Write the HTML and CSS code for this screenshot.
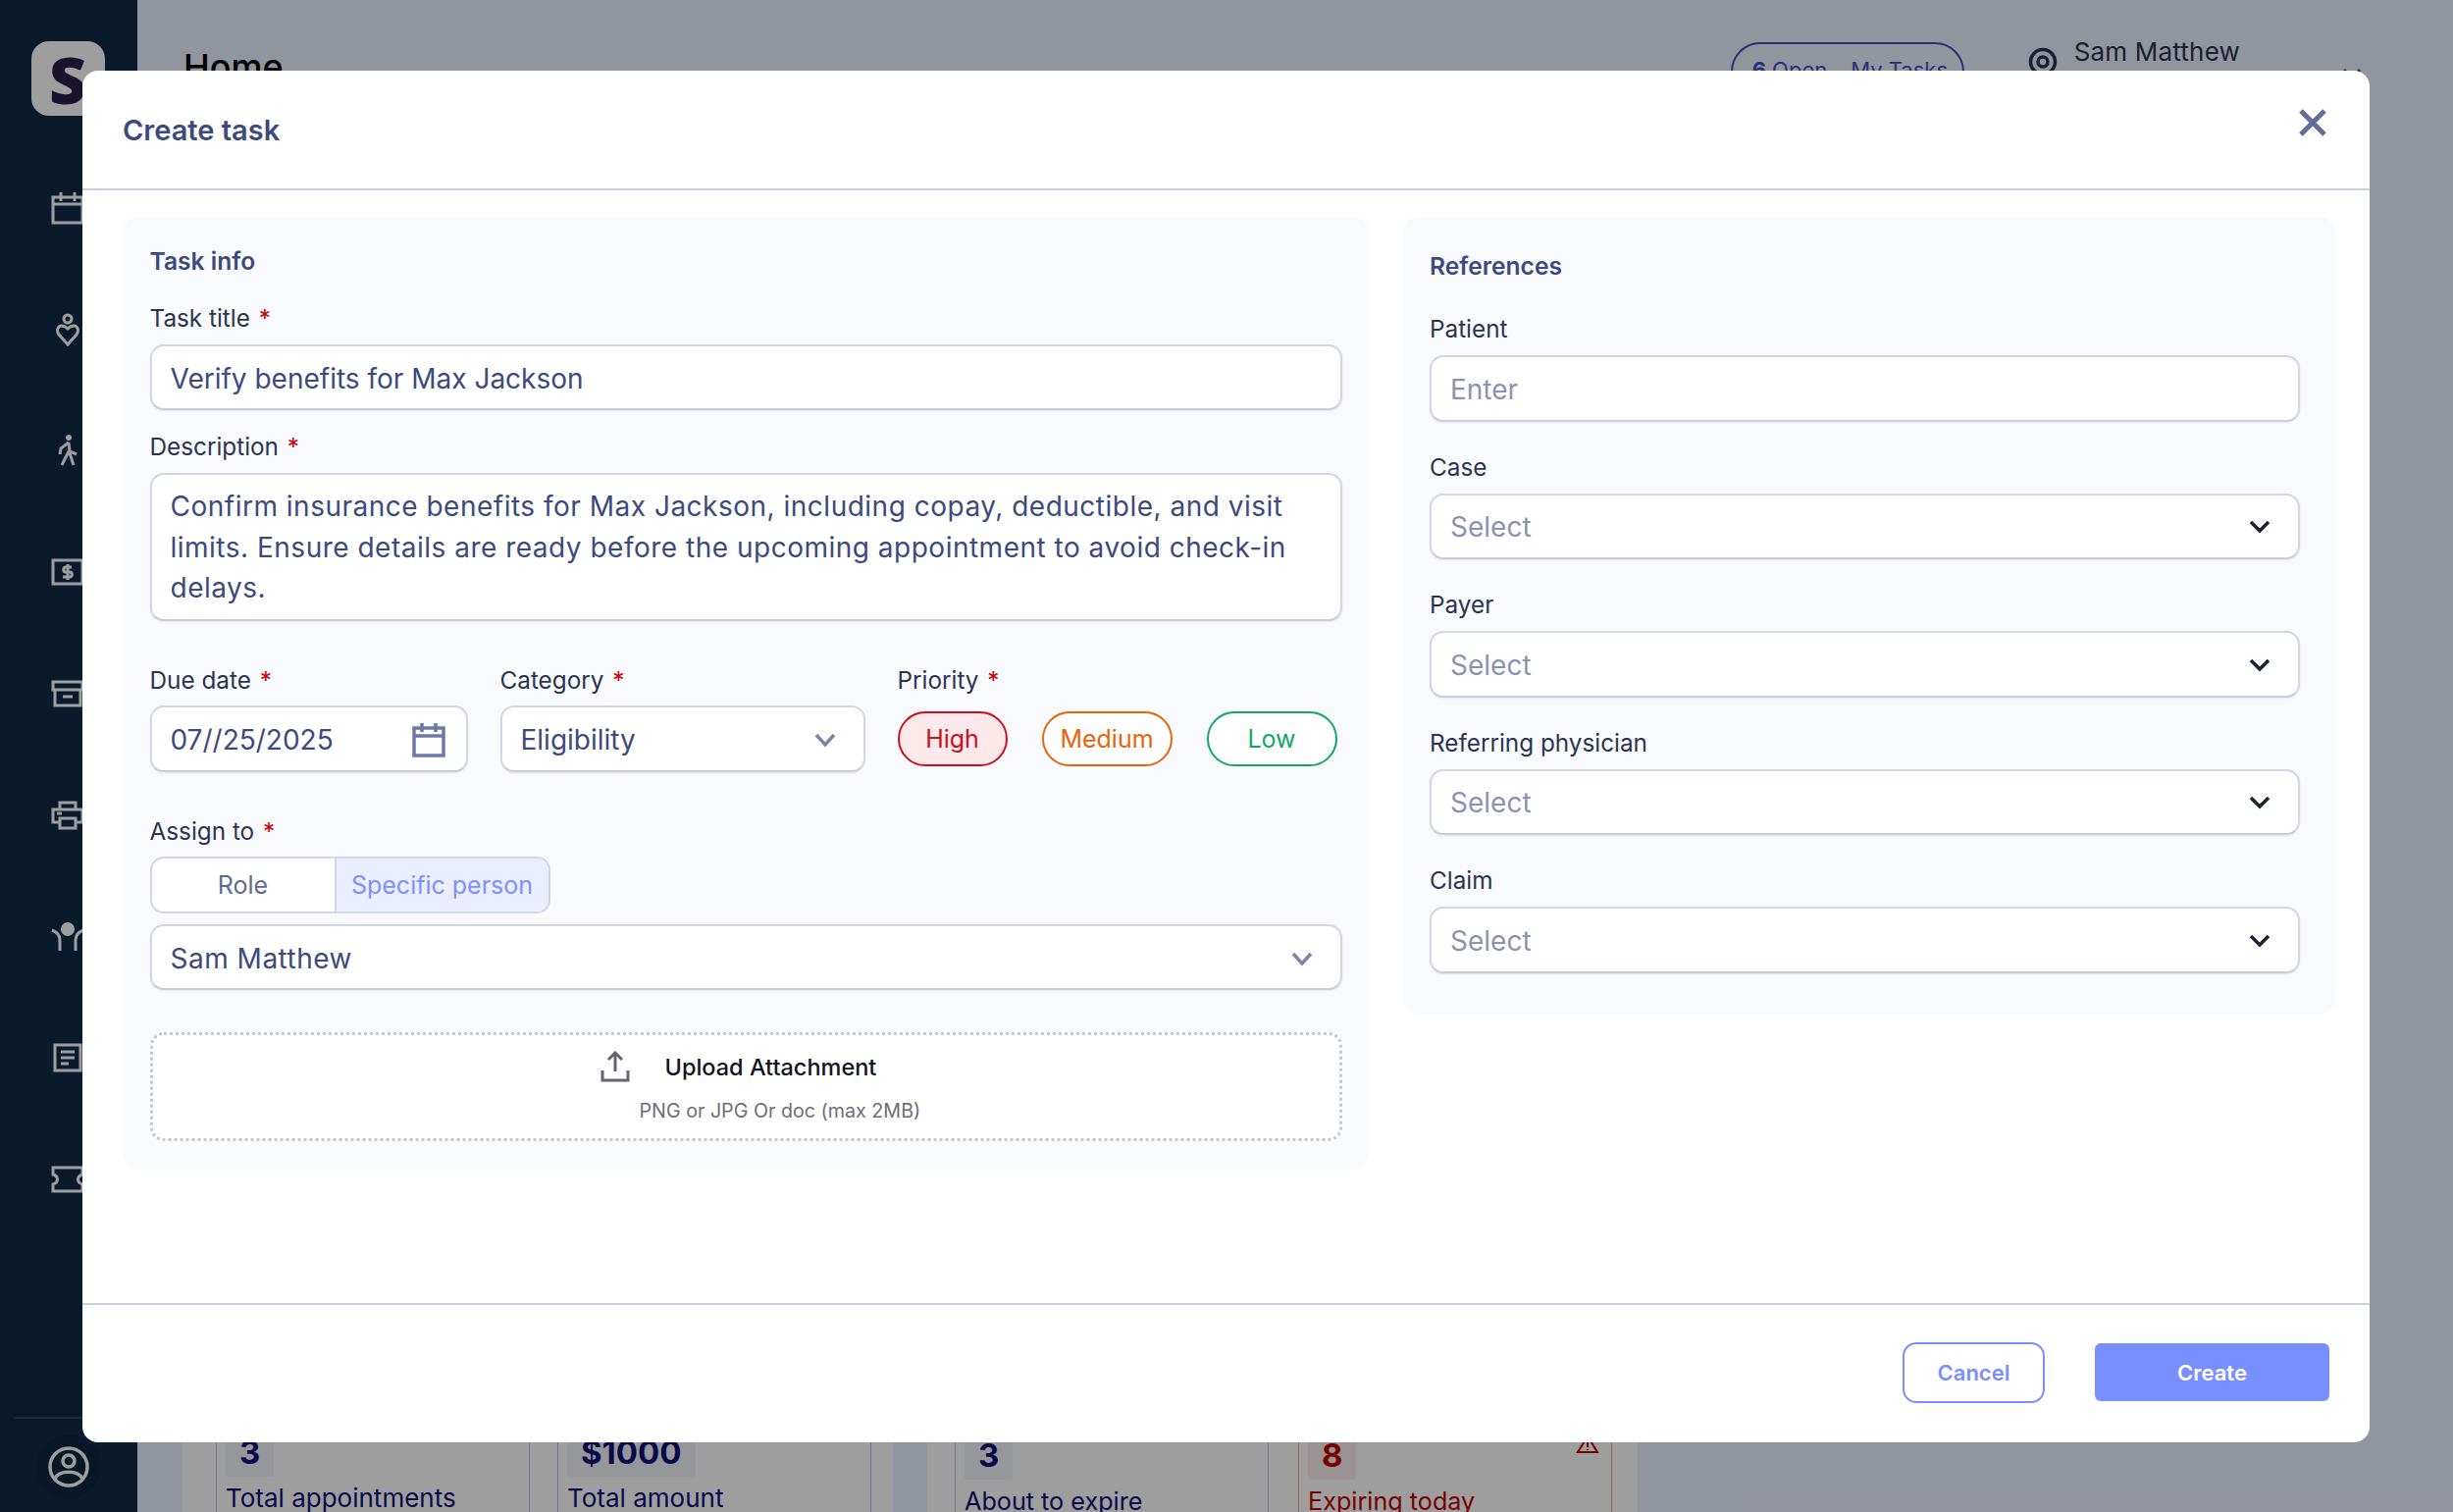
FILE: index.html
```html
<!DOCTYPE html>
<html lang="en">
<head>
<meta charset="utf-8">
<title>Create task</title>
<link rel="stylesheet" href="styles.css">
</head>
<body>
<div class="app">
  <aside class="sidebar">
    <div class="logo">S</div>
    <nav class="nav">
      <div class="nav-item"><svg width="36" height="36" viewBox="0 0 36 36" class="ico"><path d="M3 7h30v26H3zM3 14h30M11 2v9M25 2v9"/></svg></div>
      <div class="nav-item"><svg width="24" height="34" viewBox="0 0 24 34" class="ico"><circle cx="12" cy="6" r="4"/><path d="M12 32 3 22c-3-4-1-9 3-9 3 0 5 2 6 3 1-1 3-3 6-3 4 0 6 5 3 9z"/></svg></div>
      <div class="nav-item"><svg width="24" height="34" viewBox="0 0 24 34" class="ico"><circle cx="13" cy="4" r="3" class="fill"/><path d="M13 9 5 15l-1 6M13 9l1 9 7 3M13 18l-7 14M14 20l4 12" /></svg></div>
      <div class="nav-item"><svg width="34" height="28" viewBox="0 0 34 28" class="ico"><path d="M2 2h30v24H2zM21 9h-6c-3 0-3 5 0 5h4c3 0 3 5 0 5h-7M17 6v16"/></svg></div>
      <div class="nav-item"><svg width="34" height="28" viewBox="0 0 34 28" class="ico"><path d="M2 2h30v8H2zM4 10v16h26V10M12 17h10"/></svg></div>
      <div class="nav-item"><svg width="34" height="30" viewBox="0 0 34 30" class="ico"><path d="M9 9V2h16v7M9 22H2V9h30v13h-7M9 18h16v10H9zM6 13h5"/></svg></div>
      <div class="nav-item"><svg width="34" height="30" viewBox="0 0 34 30" class="ico"><ellipse cx="17" cy="7" rx="7" ry="7" class="fill"/><path d="M1 8c5 2 8 5 8 10v11M33 8c-5 2-8 5-8 10v11"/></svg></div>
      <div class="nav-item"><svg width="30" height="30" viewBox="0 0 30 30" class="ico"><path d="M2 2h26v26H2zM8 9h14M8 15h14M8 21h8"/></svg></div>
      <div class="nav-item"><svg width="34" height="28" viewBox="0 0 34 28" class="ico"><path d="M2 2h30v7c-6 2-6 8 0 10v7H2v-7c6-2 6-8 0-10z"/></svg></div>
    </nav>
    <div class="side-foot">
      <div class="avatar"><svg width="42" height="42" viewBox="0 0 42 42" class="ico thick"><circle cx="21" cy="21" r="19"/><circle cx="21" cy="15" r="6"/><path d="M7 33c4-9 24-9 28 0"/></svg></div>
    </div>
  </aside>
  <main class="main">
    <header class="topbar">
      <h1 class="page-title">Home</h1>
      <div class="top-right">
        <div class="task-pill"><span class="open"><b>6</b> Open</span><span class="mine">My Tasks</span></div>
        <div class="user">
          <svg width="30" height="30" viewBox="0 0 30 30" class="user-ico"><circle cx="15" cy="15" r="12.5"/><circle cx="15" cy="15" r="5"/></svg>
          <span class="user-name">Sam Matthew</span>
          <svg width="24" height="16" viewBox="0 0 24 16" class="user-chev"><path d="M4 3l8 9 8-9"/></svg>
        </div>
      </div>
    </header>
    <section class="stats">
      <div class="stat-group">
        <div class="stat"><span class="chip">3</span><span class="stat-label">Total appointments</span></div>
        <div class="stat"><span class="chip">$1000</span><span class="stat-label">Total amount</span></div>
      </div>
      <div class="stat-group">
        <div class="stat"><span class="chip">3</span><span class="stat-label">About to expire</span></div>
        <div class="stat danger"><span class="chip">8</span><span class="stat-label">Expiring today</span>
          <svg class="warn" width="24" height="20" viewBox="0 0 24 20"><path d="M12 2 2 18h20zM12 8v5M12 15v1"/></svg>
        </div>
      </div>
    </section>
  </main>
</div>
<div class="overlay"></div>
<div class="modal">
  <header class="modal-head">
    <h2 class="modal-title">Create task</h2>
    <svg class="close" width="28" height="28" viewBox="0 0 28 28"><path d="M2 2l24 24M26 2 2 26"/></svg>
  </header>
  <div class="modal-body">
    <section class="panel panel-left">
      <h3 class="panel-title">Task info</h3>
      <label class="label m-28">Task title <i>*</i></label>
      <div class="control">Verify benefits for Max Jackson</div>
      <label class="label m-21">Description <i>*</i></label>
      <div class="control area">Confirm insurance benefits for Max Jackson, including copay, deductible, and visit limits. Ensure details are ready before the upcoming appointment to avoid check-in delays.</div>
      <div class="row3">
        <div class="col col-date">
          <label class="label">Due date <i>*</i></label>
          <div class="control tall split">07//25/2025
            <svg width="36" height="36" viewBox="0 0 36 36" class="cal"><path d="M3 6h30v28H3zM3 14h30M11 1v9M25 1v9"/></svg>
          </div>
        </div>
        <div class="col col-cat">
          <label class="label">Category <i>*</i></label>
          <div class="control tall split">Eligibility
            <svg width="24" height="16" viewBox="0 0 24 16" class="chev soft"><path d="M3 3l9 10 9-10"/></svg>
          </div>
        </div>
        <div class="col col-pri">
          <label class="label">Priority <i>*</i></label>
          <div class="pills">
            <span class="pill high">High</span>
            <span class="pill med">Medium</span>
            <span class="pill low">Low</span>
          </div>
        </div>
      </div>
      <label class="label m-44">Assign to <i>*</i></label>
      <div class="seg"><span class="seg-a">Role</span><span class="seg-b">Specific person</span></div>
      <div class="control split m-11 wide">Sam Matthew
        <svg width="24" height="16" viewBox="0 0 24 16" class="chev soft"><path d="M3 3l9 10 9-10"/></svg>
      </div>
      <div class="upload">
        <div class="upload-row">
          <svg width="32" height="32" viewBox="0 0 32 32" class="up"><path d="M16 21V3M9 9l7-7 7 7M3 20v10h26V20"/></svg>
          <span>Upload Attachment</span>
        </div>
        <p class="upload-sub">PNG or JPG Or doc (max 2MB)</p>
      </div>
    </section>
    <section class="panel panel-right">
      <h3 class="panel-title">References</h3>
      <div class="refs">
        <div class="ref"><label class="label">Patient</label><div class="control ph">Enter</div></div>
        <div class="ref"><label class="label">Case</label><div class="control ph split">Select<svg width="24" height="16" viewBox="0 0 24 16" class="chev"><path d="M3 3l9 9 9-9"/></svg></div></div>
        <div class="ref"><label class="label">Payer</label><div class="control ph split">Select<svg width="24" height="16" viewBox="0 0 24 16" class="chev"><path d="M3 3l9 9 9-9"/></svg></div></div>
        <div class="ref"><label class="label">Referring physician</label><div class="control ph split">Select<svg width="24" height="16" viewBox="0 0 24 16" class="chev"><path d="M3 3l9 9 9-9"/></svg></div></div>
        <div class="ref"><label class="label">Claim</label><div class="control ph split">Select<svg width="24" height="16" viewBox="0 0 24 16" class="chev"><path d="M3 3l9 9 9-9"/></svg></div></div>
      </div>
    </section>
  </div>
  <footer class="modal-foot">
    <button class="btn ghost">Cancel</button>
    <button class="btn solid">Create</button>
  </footer>
</div>
</body>
</html>
```
FILE: styles.css
```css
* { box-sizing: border-box; }
html, body { margin: 0; height: 100%; }
body { width: 2500px; height: 1541px; overflow: hidden; position: relative; font-family: "Inter", "Liberation Sans", sans-serif; }
h1, h2, h3, p { margin: 0; }

.app { display: flex; width: 2500px; height: 1541px; background: #ebf0fd; }
.sidebar { width: 140px; flex: none; background: #102a4a; display: flex; flex-direction: column; align-items: center; padding-top: 42px; }
.logo { width: 75px; height: 76px; margin-right: 2px; border-radius: 18px; background: #fff; color: #2a1f4a; font: 800 66px/76px "Open Sans", sans-serif; text-align: center; }
.nav { margin-top: 32px; display: flex; flex-direction: column; width: 100%; padding-right: 3px; }
.nav-item { height: 123.8px; display: flex; align-items: center; justify-content: center; }
.ico { fill: none; stroke: #fff; stroke-width: 3; }
.ico.thick { stroke-width: 3.5; }
.ico .fill { fill: #fff; stroke: none; }
.side-foot { margin-top: auto; width: 110px; height: 97px; border-top: 2px solid #33465f; padding-top: 16px; display: flex; justify-content: center; }
.avatar { width: 66px; height: 66px; border-radius: 50%; background: #0e2642; display: flex; align-items: center; justify-content: center; }

.main { flex: 1; min-width: 0; overflow: hidden; display: flex; flex-direction: column; }
.topbar { height: 130px; padding: 42px 91px 0 47px; display: flex; justify-content: space-between; flex: none; }
.page-title { font-size: 36px; line-height: 52px; font-weight: 500; color: #000; }
.top-right { display: flex; gap: 65px; align-items: flex-start; }
.task-pill { width: 238px; height: 60px; margin-top: 1px; border: 2px solid #3f51c5; border-radius: 30px; display: flex; align-items: center; gap: 24px; padding: 0 0 4px 20px; font-size: 22px; color: #3f51c5; }
.open b { font-weight: 700; }
.user { display: flex; align-items: flex-start; }
.user-ico { fill: none; stroke: #2b3550; stroke-width: 3.5; margin: 6px 17px 0 0; flex: none; }
.user-name { font-size: 26px; line-height: 30px; letter-spacing: .2px; color: #2b3550; white-space: nowrap; margin-top: -4px; }
.user-chev { fill: none; stroke: #444c66; stroke-width: 3; margin: 26px 0 0 102px; flex: none; }

.stats { margin-top: 1270px; margin-left: 46px; display: flex; gap: 35px; flex: none; }
.stat-group { width: 724px; height: 300px; background: #fff; padding: 30px 0 0 34px; display: flex; gap: 28px; }
.stat { width: 320px; height: 200px; border: 1px solid #b5bcf0; padding: 24px 0 0 9px; display: flex; flex-direction: column; align-items: flex-start; position: relative; }
.stat-group + .stat-group { gap: 30px; padding: 33px 0 0 28px; }
.chip { background: #f2f4f9; font: 700 33px/50px "Inter", sans-serif; color: #10107a; padding: 0 14px; border-radius: 2px; }
.stat-label { margin-top: 11px; font-size: 26px; line-height: 22px; color: #10107a; }
.stat-group + .stat-group .stat-label { font-size: 25.2px; }
.danger { border-color: #f3a5a5; }
.danger .chip { background: #fbeeee; color: #c40000; }
.stat-group + .stat-group .danger .stat-label { color: #c40000; }
.warn { position: absolute; right: 12px; top: 28px; fill: none; stroke: #c40000; stroke-width: 2; }

.overlay { position: absolute; inset: 0; background: rgba(0, 0, 0, .38); }
.modal { position: absolute; left: 84px; top: 72px; width: 2331px; height: 1398px; background: #fff; border-radius: 16px; display: flex; flex-direction: column; }
.modal-head { height: 122px; flex: none; border-bottom: 2px solid #c9d0e0; display: flex; justify-content: space-between; align-items: flex-start; padding: 40px 44px 0 41px; }
.modal-title { font-size: 29px; line-height: 42px; font-weight: 600; color: #3c4a7d; }
.close { fill: none; stroke: #626e99; stroke-width: 5; margin-top: -1px; }
.modal-body { flex: 1; display: flex; gap: 35px; align-items: flex-start; padding: 27px 35px 0 41px; }
.panel { background: #f9fafe; border-radius: 16px; display: flex; flex-direction: column; }
.panel-left { width: 1270px; padding: 29px 27px 29px 27.5px; }
.panel-right { width: 950px; padding: 34px 36px 42px 27px; }
.panel-title { font-size: 24.6px; height: 30px; line-height: 32px; font-weight: 600; color: #3c4a7d; }
.label { display: block; font-size: 24.3px; height: 30px; line-height: 32px; font-weight: 400; color: #2b3550; margin-bottom: 13px; }
.label i { color: #cc0000; font-style: normal; margin-left: 2px; }
.m-28 { margin-top: 28px; }
.m-21 { margin-top: 21px; }
.m-44 { margin-top: 44px; margin-bottom: 12px; }
.m-11 { margin-top: 11px; }

.control { height: 67px; background: #fff; border: 2px solid #d3d7e3; border-bottom-color: #c9cdda; border-radius: 14px; padding: 2px 18px 0 19px; font-size: 28px; color: #3c4a7d; display: flex; align-items: center; box-shadow: 0 1px 2px rgba(60, 70, 110, .12); }
.area { height: 151px; display: block; padding-top: 12px; padding-right: 20px; line-height: 41.5px; letter-spacing: .5px; }
.wide { letter-spacing: .5px; }
.tall { height: 68px; }
.split { justify-content: space-between; }
.ph { color: #8b93b3; }
.chev { fill: none; stroke: #1a2233; stroke-width: 3.5; flex: none; margin-right: 9px; }
.chev.soft { stroke: #7c85a8; }
.cal { fill: none; stroke: #6b7aa6; stroke-width: 3.5; flex: none; margin-right: 2px; }

.row3 { display: flex; margin-top: 44px; }
.col .label { margin-bottom: 12px; }
.col-date { width: 324px; margin-right: 33px; }
.col-cat { width: 372px; margin-right: 33px; }
.col-pri { flex: 1; }
.pills { display: flex; gap: 35px; margin-top: 18px; }
.pill { height: 56px; border-radius: 28px; border: 2px solid; display: flex; align-items: center; justify-content: center; font-size: 25px; }
.high { width: 112px; color: #c8101e; border-color: #c8101e; background: #fde9ea; }
.med { width: 133px; color: #e8630a; border-color: #e8630a; background: #fff; }
.low { width: 133px; color: #12a864; border-color: #12a864; background: #fff; }

.seg { width: 408px; height: 58px; border: 2px solid #d3d7e3; border-radius: 14px; display: flex; overflow: hidden; background: #fff; font-size: 25px; }
.seg-a { width: 188px; border-right: 2px solid #d3d7e3; color: #5f6b90; display: flex; align-items: center; justify-content: center; }
.seg-b { flex: 1; background: #ebeefe; color: #7c90ff; display: flex; align-items: center; justify-content: center; white-space: nowrap; }

.upload { margin-top: 43px; height: 111px; background: #fff; border: 3px dotted #c8c8c8; border-radius: 14px; padding: 16px 0 0 455px; }
.upload-row { display: flex; align-items: center; gap: 35px; font-size: 23.5px; font-weight: 500; color: #14141e; }
.up { fill: none; stroke: #646472; stroke-width: 3; flex: none; }
.upload-sub { margin: 16px 0 0 41px; font: 400 19.7px/26px "Inter", sans-serif; color: #6e6e78; }

.refs { display: flex; flex-direction: column; gap: 30px; margin-top: 34px; }
.ref .control { height: 67.5px; }

.modal-foot { height: 142px; flex: none; border-top: 2px solid #c9d0e0; display: flex; justify-content: flex-end; align-items: flex-start; gap: 51px; padding: 38px 41px 0 0; }
.btn { font: 600 22px/1 "Inter", sans-serif; border-radius: 10px; }
.ghost { width: 145px; height: 62px; background: #fff; border: 2px solid #7a8fff; color: #7a8fff; border-radius: 14px; }
.solid { width: 239px; height: 59px; margin-top: 1px; background: #7a8fff; border: 0; color: #fff; border-radius: 6px; }
```
